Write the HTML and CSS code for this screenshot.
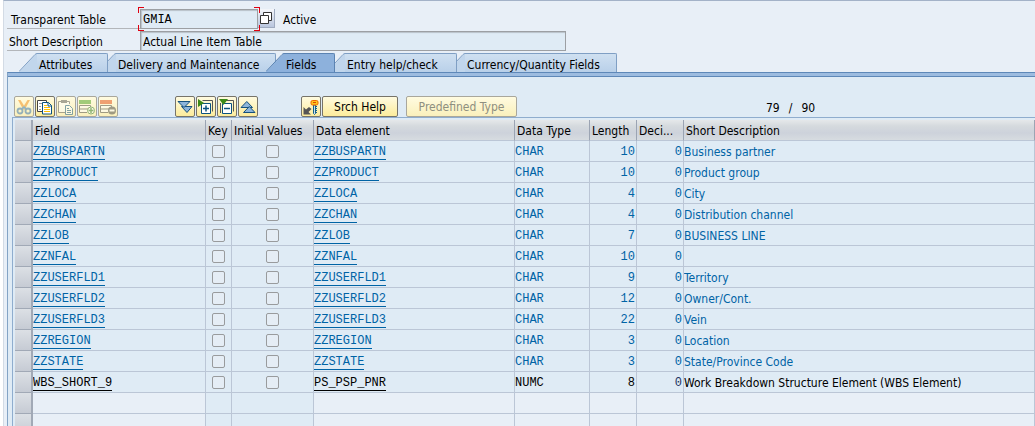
FILE: index.html
```html
<!DOCTYPE html>
<html lang="en">
<head>
<meta charset="utf-8">
<title>Dictionary: Display Table</title>
<link rel="stylesheet" href="styles.css">
</head>
<body>
<main class="screen">
  <form class="head">
    <div class="row">
      <label class="lbl indent" for="tab">Transparent Table</label>
      <span class="focus"><input class="field mono" id="tab" value="GMIA"><i class="corner tl"></i><i class="corner tr"></i><i class="corner bl"></i><i class="corner br"></i></span>
      <button class="match" type="button" aria-label="Value help"><svg width="12" height="12" viewBox="0 0 12 12"><path d="M3.500 3V.5h8v8H9" fill="#fff" stroke="#333"/><path d="M.5 3.500h8v8h-8z" fill="#fff" stroke="#333"/></svg></button>
      <span class="state">Active</span>
    </div>
    <div class="row">
      <label class="lbl" for="desc">Short Description</label>
      <input class="field long" id="desc" value="Actual Line Item Table">
    </div>
  </form>
  <nav class="tabs" role="tablist">
    <button class="tab w1" role="tab"><svg class="slant" viewBox="0 0 18 19"><path class="fill" d="M0 19L18 0V19z"/><path class="edge" d="M0 18.500L16 1.500Q17 .5 18 .5"/></svg><span>Attributes</span></button>
    <button class="tab w2" role="tab"><svg class="slant" viewBox="0 0 18 19"><path class="fill" d="M0 19L18 0V19z"/><path class="edge" d="M0 18.500L16 1.500Q17 .5 18 .5"/></svg><span>Delivery and Maintenance</span></button>
    <button class="tab w3 on" role="tab" aria-selected="true"><svg class="slant" viewBox="0 0 18 19"><path class="fill" d="M0 19L18 0V19z"/><path class="edge" d="M0 18.500L16 1.500Q17 .5 18 .5"/></svg><span>Fields</span></button>
    <button class="tab w4" role="tab"><svg class="slant" viewBox="0 0 18 19"><path class="fill" d="M0 19L18 0V19z"/><path class="edge" d="M0 18.500L16 1.500Q17 .5 18 .5"/></svg><span>Entry help/check</span></button>
    <button class="tab w5" role="tab"><svg class="slant" viewBox="0 0 18 19"><path class="fill" d="M0 19L18 0V19z"/><path class="edge" d="M0 18.500L16 1.500Q17 .5 18 .5"/></svg><span>Currency/Quantity Fields</span></button>
  </nav>
  <section class="panel">
    <div class="tools">
      <div class="group">
        <button class="btn icon" disabled aria-label="Cut"><svg viewBox="0 0 18 18"><path d="M3 2l2.500 0 5 8-2 2zM15 2l-2.500 0-5 8 2 2z" fill="#f08a10"/><g fill="none" stroke="#2f6fae" stroke-width="1.800"><circle cx="5" cy="13" r="2.500"/><circle cx="13" cy="13" r="2.500"/><path d="M7 11l2-2 2 2"/></g></svg></button>
        <button class="btn icon" aria-label="Copy"><svg viewBox="0 0 18 18"><path d="M6 13.500H1.500v-11h9V4" fill="#fff" stroke="#444"/><path d="M3 5.500h3M3 8.500h2M3 11.500h2" stroke="#999"/><path d="M6.500 4.500h6l3 3v8.500h-9z" fill="#fff" stroke="#0a5280"/><path d="M12 4.500v3.500h3.500" fill="none" stroke="#0a5280"/><path d="M8 7.500h3M8 9.500h6M8 11.500h6M8 13.500h6" stroke="#ffbf00"/></svg></button>
        <button class="btn icon" disabled aria-label="Paste"><svg viewBox="0 0 18 18"><path d="M8 14.500H1.500v-11h11V6" fill="#fff" stroke="#555"/><path d="M4 2h6v3H4z" fill="#555"/><path d="M8.500 7.500h4l3 3v6h-7z" fill="#fff" stroke="#0a5280"/><path d="M10 10.500h2M10 12.500h4M10 14.500h4" stroke="#0a5280"/></svg></button>
        <button class="btn icon" disabled aria-label="Insert row"><svg viewBox="0 0 18 18"><path d="M9 14.500H1.500v-3.500h9M1.500 11V7.500h11V9" fill="#fff" stroke="#444"/><path d="M1 2h12v4H1z" fill="#48a020"/><circle cx="13" cy="12.500" r="3.500" fill="#fff" stroke="#2a7a2a"/><path d="M13 10v5M10.500 12.500h5" stroke="#2a7a2a" stroke-width="1.500"/></svg></button>
        <button class="btn icon" disabled aria-label="Delete row"><svg viewBox="0 0 18 18"><path d="M9 14.500H1.500v-3.500h9M1.500 11V7.500h11V9" fill="#fff" stroke="#444"/><path d="M1 2h12v4H1z" fill="#e04a10"/><circle cx="13" cy="12.500" r="4" fill="#444"/><path d="M10.500 12.500h5" stroke="#fff" stroke-width="2"/></svg></button>
      </div>
      <div class="group second">
        <button class="btn icon" aria-label="Expand all"><svg viewBox="0 0 18 18"><g fill="#8db5da" stroke="#15517d"><path d="M5.500 8.500h10.500l-5 6z"/><path d="M2 3.500h12l-6 6z"/></g></svg></button>
        <button class="btn icon" aria-label="Expand"><svg viewBox="0 0 18 18"><path d="M5.500 2.500h10v11" fill="none" stroke="#555"/><path d="M4.500 5.500h9v10h-9z" fill="#fff" stroke="#0a5280"/><path d="M9 7.500v6M6 10.500h6" stroke="#0a5280" stroke-width="1.500"/><path d="M1 1l6 4-6 4z" fill="#3c8a18"/></svg></button>
        <button class="btn icon" aria-label="Collapse"><svg viewBox="0 0 18 18"><path d="M8 2.500h7.500v11M2.500 5v10" fill="none" stroke="#555"/><path d="M4.500 5.500h9v10h-9z" fill="#fff" stroke="#0a5280"/><path d="M6 10.500h6" stroke="#0a5280" stroke-width="1.500"/><path d="M1 1h9L5.500 7z" fill="#3c8a18"/></svg></button>
        <button class="btn icon" aria-label="Collapse all"><svg viewBox="0 0 18 18"><g fill="#8db5da" stroke="#15517d"><path d="M2 9.500h11.500l-5.700-6z"/><path d="M4.500 14.500h11.500l-5.700-6z"/></g></svg></button>
      </div>
      <div class="group third">
        <button class="btn icon" aria-label="Key fields"><svg viewBox="0 0 18 18"><path d="M1.500 9v7.500H9L6.500 14l3-3-2.500-2-3 2.500z" fill="#555"/><path d="M11.500 7h2v8.500l-1 1-1-1z" fill="#c7e3f0" stroke="#145f86"/><path d="M14.500 8v7" stroke="#145f86" stroke-dasharray="1 1"/><rect x="9" y="2.500" width="7" height="4.500" rx="1.500" fill="#ffc51c" stroke="#f06400"/><path d="M11 4.500h3" stroke="#dc4a00"/></svg></button>
        <button class="btn srch">Srch Help</button>
      </div>
      <button class="btn pre" disabled>Predefined Type</button>
      <span class="count"><span>79</span><span>/</span><span>90</span></span>
    </div>
    <div class="grid">
      <table>
        <colgroup><col class="c0"><col class="c1"><col class="c2"><col class="c3"><col class="c4"><col class="c5"><col class="c6"><col class="c6"><col></colgroup>
        <thead><tr><th class="sel"></th><th>Field</th><th>Key</th><th>Initial Values</th><th>Data element</th><th>Data Type</th><th>Length</th><th>Deci...</th><th>Short Description</th></tr></thead>
        <tbody>
          <tr><td class="sel"></td><td><a href="#">ZZBUSPARTN</a></td><td class="ck"><input type="checkbox" aria-label="Key"></td><td class="ck"><input type="checkbox" aria-label="Initial value"></td><td><a href="#">ZZBUSPARTN</a></td><td>CHAR</td><td class="num">10</td><td class="num dec">0</td><td class="txt">Business partner</td></tr>
          <tr><td class="sel"></td><td><a href="#">ZZPRODUCT</a></td><td class="ck"><input type="checkbox" aria-label="Key"></td><td class="ck"><input type="checkbox" aria-label="Initial value"></td><td><a href="#">ZZPRODUCT</a></td><td>CHAR</td><td class="num">10</td><td class="num dec">0</td><td class="txt">Product group</td></tr>
          <tr><td class="sel"></td><td><a href="#">ZZLOCA</a></td><td class="ck"><input type="checkbox" aria-label="Key"></td><td class="ck"><input type="checkbox" aria-label="Initial value"></td><td><a href="#">ZZLOCA</a></td><td>CHAR</td><td class="num">4</td><td class="num dec">0</td><td class="txt">City</td></tr>
          <tr><td class="sel"></td><td><a href="#">ZZCHAN</a></td><td class="ck"><input type="checkbox" aria-label="Key"></td><td class="ck"><input type="checkbox" aria-label="Initial value"></td><td><a href="#">ZZCHAN</a></td><td>CHAR</td><td class="num">4</td><td class="num dec">0</td><td class="txt">Distribution channel</td></tr>
          <tr><td class="sel"></td><td><a href="#">ZZLOB</a></td><td class="ck"><input type="checkbox" aria-label="Key"></td><td class="ck"><input type="checkbox" aria-label="Initial value"></td><td><a href="#">ZZLOB</a></td><td>CHAR</td><td class="num">7</td><td class="num dec">0</td><td class="txt">BUSINESS LINE</td></tr>
          <tr><td class="sel"></td><td><a href="#">ZZNFAL</a></td><td class="ck"><input type="checkbox" aria-label="Key"></td><td class="ck"><input type="checkbox" aria-label="Initial value"></td><td><a href="#">ZZNFAL</a></td><td>CHAR</td><td class="num">10</td><td class="num dec">0</td><td class="txt"></td></tr>
          <tr><td class="sel"></td><td><a href="#">ZZUSERFLD1</a></td><td class="ck"><input type="checkbox" aria-label="Key"></td><td class="ck"><input type="checkbox" aria-label="Initial value"></td><td><a href="#">ZZUSERFLD1</a></td><td>CHAR</td><td class="num">9</td><td class="num dec">0</td><td class="txt">Territory</td></tr>
          <tr><td class="sel"></td><td><a href="#">ZZUSERFLD2</a></td><td class="ck"><input type="checkbox" aria-label="Key"></td><td class="ck"><input type="checkbox" aria-label="Initial value"></td><td><a href="#">ZZUSERFLD2</a></td><td>CHAR</td><td class="num">12</td><td class="num dec">0</td><td class="txt">Owner/Cont.</td></tr>
          <tr><td class="sel"></td><td><a href="#">ZZUSERFLD3</a></td><td class="ck"><input type="checkbox" aria-label="Key"></td><td class="ck"><input type="checkbox" aria-label="Initial value"></td><td><a href="#">ZZUSERFLD3</a></td><td>CHAR</td><td class="num">22</td><td class="num dec">0</td><td class="txt">Vein</td></tr>
          <tr><td class="sel"></td><td><a href="#">ZZREGION</a></td><td class="ck"><input type="checkbox" aria-label="Key"></td><td class="ck"><input type="checkbox" aria-label="Initial value"></td><td><a href="#">ZZREGION</a></td><td>CHAR</td><td class="num">3</td><td class="num dec">0</td><td class="txt">Location</td></tr>
          <tr><td class="sel"></td><td><a href="#">ZZSTATE</a></td><td class="ck"><input type="checkbox" aria-label="Key"></td><td class="ck"><input type="checkbox" aria-label="Initial value"></td><td><a href="#">ZZSTATE</a></td><td>CHAR</td><td class="num">3</td><td class="num dec">0</td><td class="txt">State/Province Code</td></tr>
          <tr class="own"><td class="sel"></td><td><a href="#">WBS_SHORT_9</a></td><td class="ck"><input type="checkbox" aria-label="Key"></td><td class="ck"><input type="checkbox" aria-label="Initial value"></td><td><a href="#">PS_PSP_PNR</a></td><td>NUMC</td><td class="num">8</td><td class="num dec">0</td><td class="txt">Work Breakdown Structure Element (WBS Element)</td></tr>
          <tr class="empty"><td class="sel"></td><td></td><td class="ck"></td><td class="ck"></td><td></td><td></td><td></td><td></td><td></td></tr>
          <tr class="empty"><td class="sel"></td><td></td><td class="ck"></td><td class="ck"></td><td></td><td></td><td></td><td></td><td></td></tr>
        </tbody>
      </table>
    </div>
  </section>
</main>
</body>
</html>
```
FILE: styles.css
```css
* { box-sizing: border-box; }
html { background: #fff; overflow: hidden; }
body, button, input {
  font-family: "DejaVu Sans Condensed", "DejaVu Sans", sans-serif;
  font-stretch: condensed;
  font-size: 12px;
  line-height: 16px;
  color: #000;
}
body { margin: 0; height: 100vh; overflow: hidden; }
.screen {
  margin-left: 3px;
  padding-left: 3px;
  border-left: 1px solid #d3dbe5;
  border-top: 1px solid #a3b2c8;
  background: #e8eff7;
}
.head { padding-top: 8px; }
.row { display: flex; height: 20px; margin-bottom: 2px; align-items: stretch; }
.lbl { width: 133px; padding: 3px 0 0 2px; border-bottom: 1px solid #b3b6ba; white-space: nowrap; }
.indent { padding-left: 4px; }
.focus { position: relative; display: flex; z-index: 1; }
.field {
  width: 118px;
  padding: 1px 2px 0;
  background: #dfebf5;
  border: 1px solid #9c9fa3;
  border-radius: 0;
  box-shadow: inset 1px 1px 1px #b9c1c9;
  outline: 0;
}
.long { width: 426px; }
.mono { font-family: "Liberation Mono", monospace; }
.corner { position: absolute; width: 6px; height: 6px; border: 0 solid #e00010; }
.tl { left: -2px; top: -2px; border-width: 1px 0 0 1px; }
.tr { right: -2px; top: -2px; border-width: 1px 1px 0 0; }
.bl { left: -2px; bottom: -2px; border-width: 0 0 1px 1px; }
.br { right: -2px; bottom: -2px; border-width: 0 1px 1px 0; }
.match {
  width: 17px; height: 19px; padding: 0 0 0 2px;
  display: flex; align-items: center;
  background: linear-gradient(#f4f6fa, #b9c6de);
  border: solid #9fabc0; border-width: 0 1px 1px 0;
}
.state { padding: 3px 0 0 8px; }
.tabs { display: flex; height: 19px; margin: 2px 0 0 12px; }
.tab {
  position: relative;
  display: flex;
  height: 19px;
  padding: 0;
  border: 0;
  background: none;
  margin-right: -10px;
  white-space: nowrap;
}
.slant { width: 18px; height: 19px; flex: none; }
.fill { fill: #c1d6ec; }
.edge { fill: none; stroke: #7f9fc4; }
.tab span {
  flex: 1;
  height: 19px;
  padding: 3px 0 0 2px;
  text-align: left;
  border: solid #7f9fc4;
  border-width: 1px 1px 0 0;
  border-top-right-radius: 2px;
  background: linear-gradient(#cfe0f1, #b9d0e9);
}
.w1 { width: 89px; z-index: 5; }
.w2 { width: 178px; z-index: 4; }
.w3 { width: 69px; z-index: 6; margin-right: -8px; }
.w4 { width: 130px; z-index: 3; }
.w5 { width: 170px; z-index: 2; }
.on .fill { fill: #8db1dc; }
.on .edge { stroke: #5b83b2; }
.on span { background: #8db1dc; border-color: #5b83b2; }
.panel {
  border-top: 1px solid #5e88b8;
  border-left: 1px solid #83a3c5;
  background: #dfebf5;
}
.panel::before { content: ""; display: block; height: 3px; background: #9dbce0; border-bottom: 1px solid #5e88b8; }
.tools { display: flex; padding: 19px 0 0 6px; height: 40px; }
.group { display: flex; gap: 1px; }
.second { margin-left: 57px; }
.third { margin-left: 43px; }
.btn {
  height: 21px;
  padding: 1px 0 0;
  border: 1px solid #77746a;
  border-radius: 2px;
  background: linear-gradient(#fffbe0, #fcec9c);
}
.icon { width: 20px; padding: 0; }
.icon svg { width: 18px; height: 18px; display: block; }
.icon:disabled svg { opacity: .5; }
.btn:disabled { color: #8f8f80; border-color: #a9a79c; background: linear-gradient(#fffbe0, #faf0bc); }
.srch { width: 76px; }
.pre { width: 111px; margin-left: 8px; }
.count { display: flex; gap: 9px; padding: 4px 0 0; margin-left: 249px; }
.grid { margin-left: 4px; border: solid #8fadce; border-width: 1px 0 0 1px; padding: 2px 0 0 2px; }
table { width: 100%; table-layout: fixed; border-collapse: separate; border-spacing: 0; }
.c0 { width: 18px; }
.c1 { width: 173px; }
.c2 { width: 26px; }
.c3 { width: 82px; }
.c4 { width: 201px; }
.c5 { width: 75px; }
.c6 { width: 47px; }
th, td {
  height: 21px;
  padding: 2px 0 0;
  border: solid #bbc6d6;
  border-width: 0 1px 1px 0;
  white-space: nowrap;
  overflow: hidden;
  text-align: left;
}
th {
  padding-left: 2px;
  font-weight: normal;
  border-right-color: #9ba4b3;
  background: linear-gradient(#e5e8ea, #d5dade 30%, #cdd2db 65%, #d7dce0);
}
td { font-family: "Liberation Mono", monospace; color: #0063a5; line-height: 14px; }
td a { color: inherit; text-decoration: none; display: inline-block; border-bottom: 1px solid; height: 15px; line-height: 14px; vertical-align: middle; }
.sel { background: linear-gradient(#dce0e5, #c6cbd4); border-right: 2px solid #a1a9b6; border-bottom-color: #a1a9b6; }
.ck { text-align: center; background: #dfebf5; }
td.ck { padding: 0; }
.ck input {
  appearance: none;
  display: block;
  width: 13px; height: 13px;
  margin: 0 auto;
  border: 1px solid #999b9d;
  border-radius: 2px;
  background: #e5edf5;
}
.num { text-align: right; padding-right: 1px; }
.txt { font-family: "DejaVu Sans Condensed", "DejaVu Sans", sans-serif; }
.own td { color: #000; }
.own .dec { color: #1e3460; }
.empty td:not(.ck):not(.sel) { background: #e8eff7; }
```
